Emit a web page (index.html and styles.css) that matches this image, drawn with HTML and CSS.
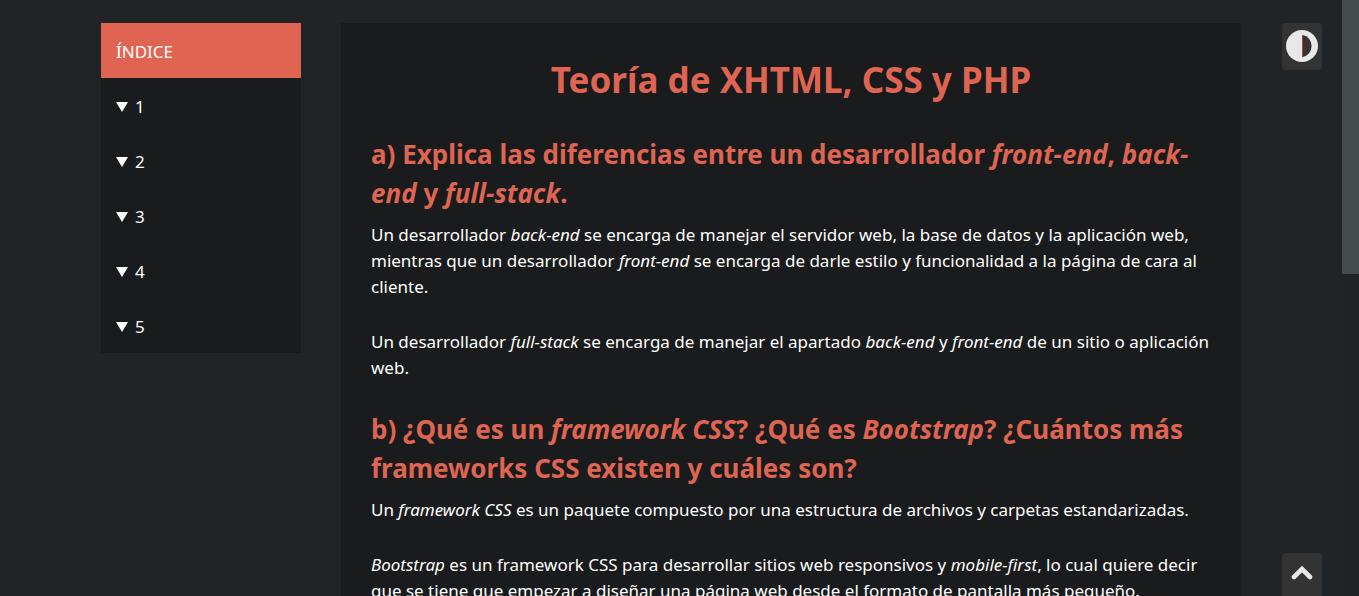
FILE: index.html
```
<!DOCTYPE html>
<html lang="es">
<head>
<meta charset="utf-8">
<title>Teoría de XHTML, CSS y PHP</title>
<link rel="stylesheet" href="styles.css">
</head>
<body>
<div class="viewport">
  <div class="layout">
    <nav class="index" aria-label="Índice">
      <a class="index-title" href="#inicio">ÍNDICE</a>
      <button class="index-item" type="button"><svg class="arrow" viewBox="0 0 12 11" aria-hidden="true"><path d="M0 1H12L6 11Z"/></svg>1</button>
      <button class="index-item" type="button"><svg class="arrow" viewBox="0 0 12 11" aria-hidden="true"><path d="M0 1H12L6 11Z"/></svg>2</button>
      <button class="index-item" type="button"><svg class="arrow" viewBox="0 0 12 11" aria-hidden="true"><path d="M0 1H12L6 11Z"/></svg>3</button>
      <button class="index-item" type="button"><svg class="arrow" viewBox="0 0 12 11" aria-hidden="true"><path d="M0 1H12L6 11Z"/></svg>4</button>
      <button class="index-item" type="button"><svg class="arrow" viewBox="0 0 12 11" aria-hidden="true"><path d="M0 1H12L6 11Z"/></svg>5</button>
    </nav>
    <main class="content" id="inicio">
      <h1>Teoría de XHTML, CSS y PHP</h1>
      <section>
        <h2>a) Explica las diferencias entre un desarrollador <em>front-end</em>, <em>back-<wbr>end</em> y <em>full-stack</em>.</h2>
        <p>Un desarrollador <em>back-end</em> se encarga de manejar el servidor web, la base de datos y la aplicación web, mientras que un desarrollador <em>front-end</em> se encarga de darle estilo y funcionalidad a la página de cara al cliente.</p>
        <p>Un desarrollador <em>full-stack</em> se encarga de manejar el apartado <em>back-end</em> y <em>front-end</em> de un sitio o aplicación web.</p>
      </section>
      <section>
        <h2>b) ¿Qué es un <em>framework CSS</em>? ¿Qué es <em>Bootstrap</em>? ¿Cuántos más frameworks CSS existen y cuáles son?</h2>
        <p>Un <em>framework CSS</em> es un paquete compuesto por una estructura de archivos y carpetas estandarizadas.</p>
        <p><em>Bootstrap</em> es un framework CSS para desarrollar sitios web responsivos y <em>mobile-first</em>, lo cual quiere decir que se tiene que empezar a diseñar una página web desde el formato de pantalla más pequeño.</p>
      </section>
    </main>
  </div>
</div>
<button class="tool tool-theme" type="button" aria-label="Cambiar tema">
  <svg width="32" height="32" viewBox="0 0 32 32" aria-hidden="true"><circle cx="16" cy="16" r="16" fill="#e8e8e8"/><path d="M16.500 5A11.200 11.200 0 0 1 16.500 27Z" fill="#333"/><path d="M16.500 5V27" stroke="#b63a32" stroke-width="1"/></svg>
</button>
<a class="tool tool-top" href="#inicio" aria-label="Volver arriba">
  <svg width="22" height="14" viewBox="0 0 22 14" aria-hidden="true"><path d="M3 11L11 3L19 11" fill="none" stroke="#e8e8e8" stroke-width="4.600"  stroke-linecap="round"/></svg>
</a>
<div class="scrollbar" aria-hidden="true"><div class="thumb"></div></div>
</body>
</html>
```
FILE: styles.css
```
* { box-sizing: border-box; }
body {
  margin: 0;
  background: #202426;
  color: #fff;
  font-family: "Segoe UI", "Noto Sans", sans-serif;
  font-size: 17px;
  line-height: 26px;
}
.viewport {
  height: 100vh;
  overflow-y: auto;
  scrollbar-width: none;
  padding: 23px 17px 0 0;
}
.layout {
  display: grid;
  grid-template-columns: 200px minmax(0, 1fr);
  gap: 40px;
  align-items: start;
  max-width: 1140px;
  margin: 0 auto;
}
.index { background: #1a1b1c; }
.index-title, .index-item {
  display: flex;
  align-items: center;
  width: 100%;
  height: 55px;
  padding: 2px 15px 0;
  color: #fff;
  font: inherit;
}
.index-title { background: #df6552; text-decoration: none; }
.index-item { gap: 7px; border: 0; background: none; text-align: left; }
.arrow { width: 12px; height: 11px; fill: #fff; }
.content { background: #1a1b1c; padding: 30px; }
h1, h2 { margin: 0; color: #df6552; font-weight: 700; }
h1 { margin-bottom: 28px; font-size: 35px; line-height: 54px; text-align: center; }
h2 { margin-bottom: 9px; font-size: 26px; line-height: 39px; }
p { margin: 0 0 29px; }
.tool {
  position: fixed;
  right: 37px;
  display: flex;
  align-items: center;
  justify-content: center;
  width: 40px;
  height: 47px;
  padding: 0;
  border: 0;
  border-radius: 4px;
  background: #333;
}
.tool-theme { top: 23px; padding-bottom: 2px; }
.tool-top { bottom: -4px; padding-bottom: 7px; }
.scrollbar { position: fixed; top: 0; right: 0; bottom: 0; width: 17px; background: #202324; }
.thumb { height: 46%; background: #454a4d; }
```
